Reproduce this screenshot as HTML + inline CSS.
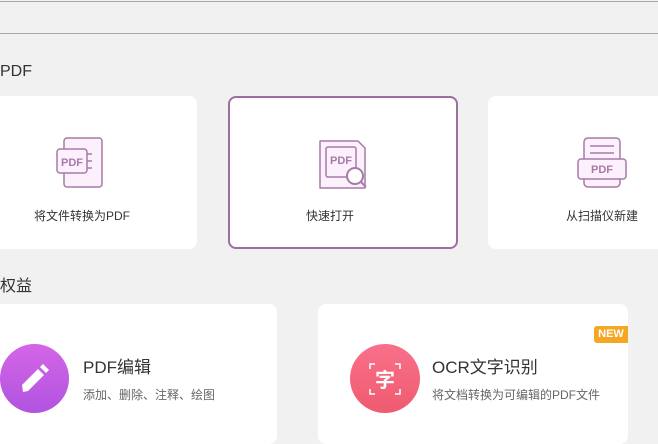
<!DOCTYPE html>
<html><head><meta charset="utf-8"><style>
*{margin:0;padding:0;box-sizing:border-box}
body{width:658px;height:427px;overflow:hidden;background:#f1f1f1;position:relative;font-family:"Liberation Sans","Noto Sans CJK SC",sans-serif;color:#333}
.a{position:absolute}
.card{position:absolute;background:#fff;border-radius:8px}
.lbl{font-size:12px;color:#333;position:absolute;white-space:nowrap;top:112px}
</style></head><body>
<div class="a" style="left:0;top:1px;width:658px;height:1px;background:#a8a8a8"></div>
<div class="a" style="left:0;top:33px;width:658px;height:1px;background:#a8a8a8"></div>
<div class="a" style="left:0;top:63px;font-size:16px;color:#333">PDF</div>

<div class="card" style="left:-10px;top:96px;width:207px;height:153px">
<svg class="a" style="left:66px;top:41px" width="52" height="52" viewBox="0 0 52 52">
<rect x="8" y="1" width="38" height="49" rx="3" fill="#fdf0fd" stroke="#a87aa8" stroke-width="1.5"/>
<rect x="1" y="12" width="30" height="24" rx="3" fill="#fdf0fd" stroke="#a87aa8" stroke-width="1.5"/>
<text x="16" y="29" font-size="11" font-weight="bold" fill="#a87aa8" text-anchor="middle" font-family="Liberation Sans">PDF</text>
<path d="M31 17h5M31 24h5M31 31h5" stroke="#a87aa8" stroke-width="1.5"/>
</svg>
<div class="lbl" style="left:44px;top:111px">将文件转换为PDF</div>
</div>

<div class="card" style="left:228px;top:96px;width:230px;height:153px;border:2px solid #9b6f9f">
<svg class="a" style="left:88px;top:40px" width="54" height="54" viewBox="0 0 54 54">
<path d="M2 3h38l7 7v40H2z" fill="#fdf0fd" stroke="#a87aa8" stroke-width="1.5" stroke-linejoin="round"/>
<rect x="8" y="9" width="30" height="30" rx="2" fill="#fdf0fd" stroke="#a87aa8" stroke-width="1.5"/>
<text x="23" y="26" font-size="11" font-weight="bold" fill="#a87aa8" text-anchor="middle" font-family="Liberation Sans">PDF</text>
<circle cx="37" cy="38" r="8" fill="#fff" stroke="#a87aa8" stroke-width="2"/>
<path d="M43 44l5 5" stroke="#a87aa8" stroke-width="2"/>
</svg>
<div class="lbl" style="left:76px;top:109px">快速打开</div>
</div>

<div class="card" style="left:488px;top:96px;width:190px;height:153px">
<svg class="a" style="left:89px;top:41px" width="54" height="52" viewBox="0 0 54 52">
<rect x="7" y="1" width="36" height="49" rx="4" fill="#fdf0fd" stroke="#a87aa8" stroke-width="1.5"/>
<path d="M13 9h24M13 16h24" stroke="#a87aa8" stroke-width="1.5"/>
<rect x="1" y="22" width="48" height="20" rx="3" fill="#fdf0fd" stroke="#a87aa8" stroke-width="1.5"/>
<text x="25" y="36" font-size="11" font-weight="bold" fill="#a87aa8" text-anchor="middle" font-family="Liberation Sans">PDF</text>
</svg>
<div class="lbl" style="left:78px;top:111px">从扫描仪新建</div>
</div>

<div class="a" style="left:0;top:272px;font-size:16px;color:#333">权益</div>

<div class="card" style="left:-10px;top:304px;width:287px;height:140px">
<div class="a" style="left:10px;top:40px;width:69px;height:69px;border-radius:50%;background:linear-gradient(#d565e6,#b054e0)"></div>
<svg class="a" style="left:22px;top:55px" width="42" height="42" viewBox="0 0 42 42">
<path d="M11 33l-1 -7L26 10l6 6L16 32z" fill="#fff"/>
<path d="M28 8l3 -3l6 6l-3 3z" fill="#fff"/>
</svg>
<div class="a" style="left:93px;top:49px;font-size:17px;color:#333">PDF编辑</div>
<div class="a" style="left:93px;top:82px;font-size:12px;color:#666">添加、删除、注释、绘图</div>
</div>

<div class="card" style="left:318px;top:304px;width:310px;height:140px">
<div class="a" style="right:0;top:22px;width:34px;height:17px;background:#f5a623;border-radius:3px 0 0 3px;color:#fff;font-size:11px;font-weight:bold;text-align:center;line-height:17px">NEW</div>
<div class="a" style="left:32px;top:40px;width:70px;height:69px;border-radius:50%;background:linear-gradient(#f9708a,#ef5b70)"></div>
<svg class="a" style="left:50px;top:58px" width="34" height="34" viewBox="0 0 34 34">
<path d="M2 7V2h5M27 2h5v5M32 27v5h-5M7 32H2v-5" stroke="#fff" stroke-width="1.5" fill="none"/>
<text x="17" y="25" font-size="20" font-weight="bold" fill="#fff" text-anchor="middle" font-family="Noto Sans CJK SC">字</text>
</svg>
<div class="a" style="left:114px;top:49px;font-size:17px;color:#333">OCR文字识别</div>
<div class="a" style="left:114px;top:82px;font-size:12px;color:#666">将文档转换为可编辑的PDF文件</div>
</div>
</body></html>
